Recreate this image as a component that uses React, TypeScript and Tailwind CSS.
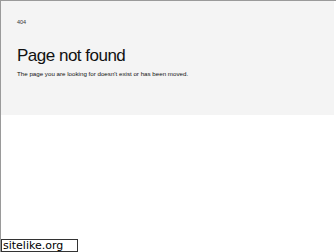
export default function App() {
  return (
    <div className="relative w-[336px] h-[252px] bg-white overflow-hidden border-t border-l border-[#9a9a9a]" style={{ fontFamily: '"Liberation Sans", Arial, sans-serif' }}>
      <div className="w-[333px] h-[114px] bg-[#f4f4f4] pl-[16px] pt-[18px]">
        <div className="text-[5.5px] leading-[7px] text-[#333]">404</div>
        <h1 className="mt-[20px] text-[17px] leading-[20px] tracking-[-0.5px] text-[#111]">Page not found</h1>
        <p className="mt-[4px] text-[6.2px] leading-[8px] text-[#111] font-medium">The page you are looking for doesn&apos;t exist or has been moved.</p>
      </div>
      <div className="absolute left-0 bottom-0 w-[77px] h-[13px] border border-[#333] bg-white text-[11px] leading-[11px] text-black pl-[1px]" style={{ fontFamily: '"DejaVu Sans", Verdana, sans-serif' }}>sitelike.org</div>
    </div>
  );
}
